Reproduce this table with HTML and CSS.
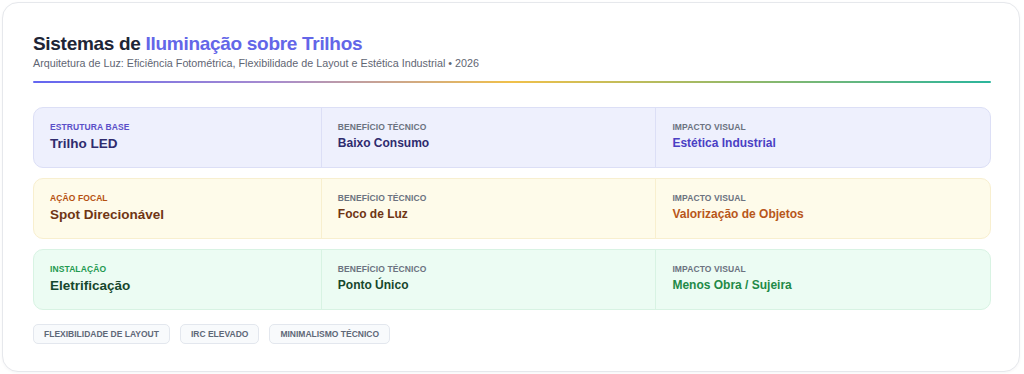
FILE: index.html
```html
<!DOCTYPE html>
<html lang="pt">
<head>
<meta charset="utf-8">
<title>Sistemas de Iluminação sobre Trilhos</title>
<link rel="stylesheet" href="styles.css">
</head>
<body>
<main class="card">
  <header class="head">
    <h1 class="title">Sistemas de <span class="accent">Iluminação sobre Trilhos</span></h1>
    <p class="subtitle">Arquitetura de Luz: Eficiência Fotométrica, Flexibilidade de Layout e Estética Industrial • 2026</p>
  </header>
  <div class="rule"></div>
  <section class="rows">
    <div class="row row-indigo">
      <div class="cell">
        <div class="label">Estrutura Base</div>
        <div class="value">Trilho LED</div>
      </div>
      <div class="cell">
        <div class="label muted">Benefício Técnico</div>
        <div class="value">Baixo Consumo</div>
      </div>
      <div class="cell">
        <div class="label muted">Impacto Visual</div>
        <div class="value strong">Estética Industrial</div>
      </div>
    </div>
    <div class="row row-amber">
      <div class="cell">
        <div class="label">Ação Focal</div>
        <div class="value">Spot Direcionável</div>
      </div>
      <div class="cell">
        <div class="label muted">Benefício Técnico</div>
        <div class="value">Foco de Luz</div>
      </div>
      <div class="cell">
        <div class="label muted">Impacto Visual</div>
        <div class="value strong">Valorização de Objetos</div>
      </div>
    </div>
    <div class="row row-green">
      <div class="cell">
        <div class="label">Instalação</div>
        <div class="value">Eletrificação</div>
      </div>
      <div class="cell">
        <div class="label muted">Benefício Técnico</div>
        <div class="value">Ponto Único</div>
      </div>
      <div class="cell">
        <div class="label muted">Impacto Visual</div>
        <div class="value strong">Menos Obra / Sujeira</div>
      </div>
    </div>
  </section>
  <footer class="tags">
    <span class="tag">Flexibilidade de Layout</span>
    <span class="tag">IRC Elevado</span>
    <span class="tag">Minimalismo Técnico</span>
  </footer>
</main>
</body>
</html>
```
FILE: styles.css
```css
* { box-sizing: border-box; }
html, body { margin: 0; background: #ffffff; }
body {
  padding: 2px 4px 2px 2px;
  font-family: "Liberation Sans", Arial, sans-serif;
}
.card {
  height: 370px;
  border: 1px solid #e6e8ec;
  border-radius: 16px;
  background: #ffffff;
  box-shadow: 0 1px 3px rgba(15, 23, 42, 0.04);
  padding: 29px 28px 0 30px;
}
.head { margin: 0; }
.title {
  margin: 0;
  font-size: 19px;
  line-height: 24px;
  font-weight: 700;
  color: #1e2536;
  letter-spacing: -0.3px;
}
.accent { color: #6366e8; }
.subtitle {
  margin: 0;
  font-size: 10.75px;
  line-height: 14px;
  color: #5f6673;
}
.rule {
  height: 2px;
  margin-top: 11px;
  background: linear-gradient(90deg, #6366f1 0%, #a78bcf 25%, #f0c04a 50%, #8fb86a 75%, #2bb59c 100%);
  border-radius: 1px;
}
.rows {
  margin-top: 24px;
  display: flex;
  flex-direction: column;
  gap: 10px;
}
.row {
  display: grid;
  grid-template-columns: 30% 35% 35%;
  height: 61px;
  border-radius: 10px;
  border: 1px solid;
  overflow: hidden;
}
.cell {
  padding: 13px 16px 0 16px;
  border-left: 1px solid;
  border-color: inherit;
}
.cell:first-child { border-left: 0; }
.label {
  font-size: 8.5px;
  line-height: 12px;
  font-weight: 700;
  text-transform: uppercase;
  letter-spacing: 0.1px;
}
.value {
  margin-top: 2px;
  font-size: 12px;
  line-height: 17px;
  font-weight: 700;
}
.cell:first-child .value { font-size: 13.5px; }

.row-indigo { background: #eef0fd; border-color: #dcdff6; }
.row-indigo .label { color: #5a4fc8; }
.row-indigo .value { color: #2f2b6e; }
.row-indigo .value.strong { color: #4a3fc4; }

.row-amber { background: #fefbea; border-color: #f8efcf; }
.row-amber .label { color: #b5500f; }
.row-amber .value { color: #6f3514; }
.row-amber .value.strong { color: #b8561a; }

.row-green { background: #ecfcf3; border-color: #d8f3e3; }
.row-green .label { color: #22994f; }
.row-green .value { color: #16472d; }
.row-green .value.strong { color: #1f8a47; }

.row .label.muted { color: #6b7280; }

.tags {
  margin-top: 14px;
  display: flex;
  gap: 10px;
}
.tag {
  display: inline-block;
  height: 20px;
  line-height: 18px;
  padding: 0 10px;
  font-size: 8.5px;
  font-weight: 700;
  text-transform: uppercase;
  color: #5f6878;
  background: #f8fafc;
  border: 1px solid #e3e7ee;
  border-radius: 5px;
}
```
